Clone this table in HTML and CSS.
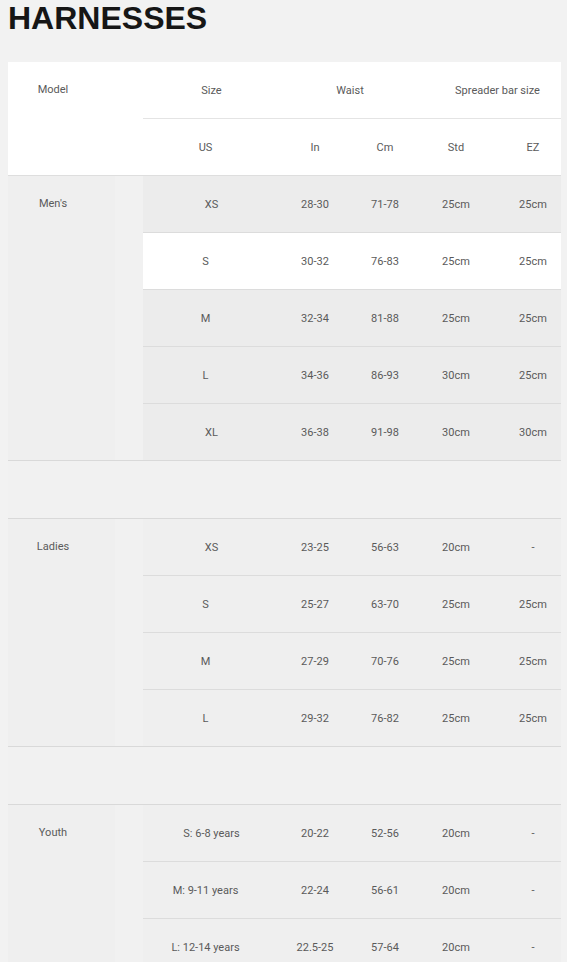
FILE: index.html
```html
<!DOCTYPE html>
<html>
<head>
<meta charset="utf-8">
<link rel="stylesheet" href="styles.css">
</head>
<body>
<h1 class="title">HARNESSES</h1>
<div class="table">
  <div class="thead">
    <div class="model-head">Model</div>
    <div class="head-rows">
      <div class="row head-row1">
        <div class="cell">Size</div>
        <div class="cell span2">Waist</div>
        <div class="cell span2 spreader">Spreader bar size</div>
      </div>
      <div class="row head-row2">
        <div class="cell size">US</div>
        <div class="cell">In</div>
        <div class="cell">Cm</div>
        <div class="cell">Std</div>
        <div class="cell ez">EZ</div>
      </div>
    </div>
  </div>

  <div class="group mens">
    <div class="model"><span class="model-label">Men's</span></div>
    <div class="rows">
      <div class="row"><div class="cell">XS</div><div class="cell">28-30</div><div class="cell">71-78</div><div class="cell">25cm</div><div class="cell ez">25cm</div></div>
      <div class="row white"><div class="cell size">S</div><div class="cell">30-32</div><div class="cell">76-83</div><div class="cell">25cm</div><div class="cell ez">25cm</div></div>
      <div class="row"><div class="cell size">M</div><div class="cell">32-34</div><div class="cell">81-88</div><div class="cell">25cm</div><div class="cell ez">25cm</div></div>
      <div class="row"><div class="cell size">L</div><div class="cell">34-36</div><div class="cell">86-93</div><div class="cell">30cm</div><div class="cell ez">25cm</div></div>
      <div class="row"><div class="cell">XL</div><div class="cell">36-38</div><div class="cell">91-98</div><div class="cell">30cm</div><div class="cell ez">30cm</div></div>
    </div>
  </div>
  <div class="spacer"></div>

  <div class="group">
    <div class="model"><span class="model-label">Ladies</span></div>
    <div class="rows">
      <div class="row"><div class="cell">XS</div><div class="cell">23-25</div><div class="cell">56-63</div><div class="cell">20cm</div><div class="cell ez">-</div></div>
      <div class="row"><div class="cell size">S</div><div class="cell">25-27</div><div class="cell">63-70</div><div class="cell">25cm</div><div class="cell ez">25cm</div></div>
      <div class="row"><div class="cell size">M</div><div class="cell">27-29</div><div class="cell">70-76</div><div class="cell">25cm</div><div class="cell ez">25cm</div></div>
      <div class="row"><div class="cell size">L</div><div class="cell">29-32</div><div class="cell">76-82</div><div class="cell">25cm</div><div class="cell ez">25cm</div></div>
    </div>
  </div>
  <div class="spacer"></div>

  <div class="group">
    <div class="model"><span class="model-label">Youth</span></div>
    <div class="rows">
      <div class="row"><div class="cell">S: 6-8 years</div><div class="cell">20-22</div><div class="cell">52-56</div><div class="cell">20cm</div><div class="cell ez">-</div></div>
      <div class="row"><div class="cell size">M: 9-11 years</div><div class="cell">22-24</div><div class="cell">56-61</div><div class="cell">20cm</div><div class="cell ez">-</div></div>
      <div class="row"><div class="cell size">L: 12-14 years</div><div class="cell">22.5-25</div><div class="cell">57-64</div><div class="cell">20cm</div><div class="cell ez">-</div></div>
    </div>
  </div>
</div>
</body>
</html>
```

FILE: styles.css
```css
html, body {
  margin: 0;
  padding: 0;
  background: #f2f2f2;
}

body {
  font-family: Roboto, "Liberation Sans", Arial, sans-serif;
  font-size: 11px;
  color: #5a5a5a;
}

.title {
  margin: 0 0 26px 0;
  padding-left: 8px;
  font-family: "Liberation Sans", Arial, sans-serif;
  font-weight: bold;
  font-size: 32px;
  line-height: 36px;
  color: #161616;
}

.table {
  width: 553px;
  margin-left: 8px;
}

.thead {
  display: grid;
  grid-template-columns: 135px 1fr;
  background: #ffffff;
  border-bottom: 1px solid #dedede;
}

.model-head {
  width: 90px;
  text-align: center;
  line-height: 56px;
}

.group {
  display: grid;
  grid-template-columns: 135px 1fr;
  border-bottom: 1px solid #d9d9d9;
  background: #f1f1f1;
}

.model {
  background: linear-gradient(to right, #efefef 0, #efefef 107px, #f1f1f1 107px);
}

.model-label {
  display: block;
  width: 90px;
  text-align: center;
  line-height: 56px;
}

.row {
  display: grid;
  grid-template-columns: 137px 70px 70px 72px 69px;
  height: 56px;
  align-items: center;
  background: #efefef;
  border-bottom: 1px solid #dcdcdc;
}

.rows .row:last-child {
  border-bottom: none;
}

.mens .row {
  background: #ececec;
}

.head-rows .row {
  background: #ffffff;
}

.head-row1 {
  border-bottom: 1px solid #e4e4e4;
}

.head-row2 {
  border-bottom: none;
}

.mens .row.white {
  background: #ffffff;
}

.cell {
  text-align: center;
  white-space: nowrap;
}

.cell.size {
  padding-right: 12px;
}

.span2 {
  grid-column: span 2;
}

.spreader {
  padding-left: 14px;
}

.ez {
  padding-left: 13px;
}

.spacer {
  height: 57px;
  background: #f1f1f1;
  border-bottom: 1px solid #d9d9d9;
}
```
